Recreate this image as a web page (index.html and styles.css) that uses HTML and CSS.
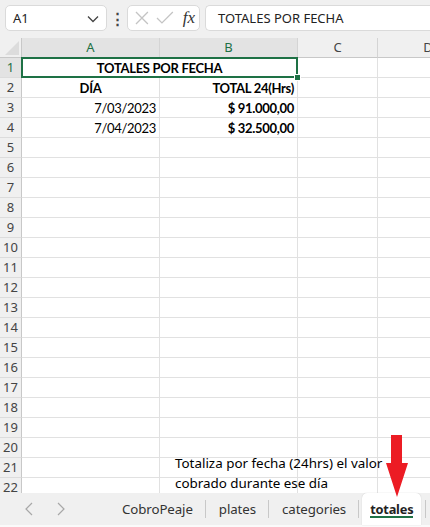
FILE: index.html
```html
<!DOCTYPE html>
<html lang="es">
<head>
<meta charset="utf-8">
<link rel="stylesheet" href="styles.css">
</head>
<body>
<div class="app">
  <div class="topbar">
    <div class="namebox"><span>A1</span>
      <svg class="chev" width="12" height="8" viewBox="0 0 12 8"><path d="M1 1.5 L6 6.5 L11 1.5" fill="none" stroke="#444" stroke-width="1.3"/></svg>
    </div>
    <div class="dots">⋮</div>
    <div class="fxbox">
      <svg width="16" height="16" viewBox="0 0 16 16"><path d="M2 2 L14 14 M14 2 L2 14" stroke="#c4c4c4" stroke-width="1.3" fill="none"/></svg>
      <svg width="18" height="16" viewBox="0 0 18 16"><path d="M1 8 L6 13 L17 2" stroke="#c4c4c4" stroke-width="1.3" fill="none"/></svg>
      <span class="fx">fx</span>
    </div>
    <div class="formula">TOTALES POR FECHA</div>
  </div>

  <div class="sheet">
    <div class="corner"><span class="tri"></span></div>
    <div class="ch sel">A</div>
    <div class="ch sel">B</div>
    <div class="ch">C</div>
    <div class="ch last">D</div>

    <div class="rh sel">1</div>
    <div class="c merged b center">TOTALES POR FECHA<span class="selbox"><span class="handle"></span></span></div>
    <div class="c"></div>
    <div class="c"></div>

    <div class="rh">2</div>
    <div class="c b center">DÍA</div>
    <div class="c b right">TOTAL 24(Hrs)</div>
    <div class="c"></div>
    <div class="c"></div>

    <div class="rh">3</div>
    <div class="c right">7/03/2023</div>
    <div class="c b right">$ 91.000,00</div>
    <div class="c"></div>
    <div class="c"></div>

    <div class="rh">4</div>
    <div class="c right">7/04/2023</div>
    <div class="c b right">$ 32.500,00</div>
    <div class="c"></div>
    <div class="c"></div>

    <div class="rh">5</div><div class="c"></div><div class="c"></div><div class="c"></div><div class="c"></div>
    <div class="rh">6</div><div class="c"></div><div class="c"></div><div class="c"></div><div class="c"></div>
    <div class="rh">7</div><div class="c"></div><div class="c"></div><div class="c"></div><div class="c"></div>
    <div class="rh">8</div><div class="c"></div><div class="c"></div><div class="c"></div><div class="c"></div>
    <div class="rh">9</div><div class="c"></div><div class="c"></div><div class="c"></div><div class="c"></div>
    <div class="rh">10</div><div class="c"></div><div class="c"></div><div class="c"></div><div class="c"></div>
    <div class="rh">11</div><div class="c"></div><div class="c"></div><div class="c"></div><div class="c"></div>
    <div class="rh">12</div><div class="c"></div><div class="c"></div><div class="c"></div><div class="c"></div>
    <div class="rh">13</div><div class="c"></div><div class="c"></div><div class="c"></div><div class="c"></div>
    <div class="rh">14</div><div class="c"></div><div class="c"></div><div class="c"></div><div class="c"></div>
    <div class="rh">15</div><div class="c"></div><div class="c"></div><div class="c"></div><div class="c"></div>
    <div class="rh">16</div><div class="c"></div><div class="c"></div><div class="c"></div><div class="c"></div>
    <div class="rh">17</div><div class="c"></div><div class="c"></div><div class="c"></div><div class="c"></div>
    <div class="rh">18</div><div class="c"></div><div class="c"></div><div class="c"></div><div class="c"></div>
    <div class="rh">19</div><div class="c"></div><div class="c"></div><div class="c"></div><div class="c"></div>
    <div class="rh">20</div><div class="c"></div><div class="c"></div><div class="c"></div><div class="c"></div>
    <div class="rh">21</div><div class="c"></div><div class="c"></div><div class="c"></div><div class="c"></div>
    <div class="rh">22</div><div class="c"></div><div class="c"></div><div class="c"></div><div class="c"></div>

    <div class="note">Totaliza por fecha (24hrs) el valor<br>cobrado durante ese día</div>
  </div>

  <div class="tabbar">
    <div class="navs">
      <svg width="10" height="14" viewBox="0 0 10 14"><path d="M8 1 L2 7 L8 13" fill="none" stroke="#a8a8a8" stroke-width="1.2"/></svg>
      <svg width="10" height="14" viewBox="0 0 10 14"><path d="M2 1 L8 7 L2 13" fill="none" stroke="#a8a8a8" stroke-width="1.2"/></svg>
    </div>
    <div class="tab">CobroPeaje</div>
    <div class="sep"></div>
    <div class="tab">plates</div>
    <div class="sep"></div>
    <div class="tab">categories</div>
    <div class="sep"></div>
    <div class="tab active">totales</div>
    <div class="sep"></div>
  </div>

  <svg class="arrow" width="26" height="64" viewBox="0 0 26 64"><path d="M7 0 H18 V28 H24 L13 62 L2 28 H7 Z" fill="#ec1c24"/></svg>
</div>
</body>
</html>
```

FILE: styles.css
```css
* { box-sizing: border-box; }
html, body { margin: 0; padding: 0; }
body {
  width: 430px;
  height: 527px;
  overflow: hidden;
  background: #f0f0f0;
  font-family: "Noto Sans", "Open Sans", sans-serif;
  color: #222;
}
.app { position: relative; width: 430px; height: 527px; display: flex; flex-direction: column; overflow: hidden; }

.topbar {
  height: 38px;
  display: flex;
  align-items: flex-start;
  padding: 5px 0 0 5px;
  background: #f0f0f0;
  flex: none;
}
.namebox {
  width: 102px;
  height: 26px;
  background: #fff;
  border: 1px solid #dadada;
  border-radius: 5px;
  display: flex;
  align-items: center;
  justify-content: space-between;
  padding: 0 7px 0 7px;
  font-size: 13px;
  color: #222;
}
.chev { margin-top: 1px; }
.dots {
  width: 20px;
  text-align: center;
  font-size: 15px;
  line-height: 26px;
  font-weight: bold;
  color: #444;
}
.fxbox {
  width: 73px;
  height: 26px;
  background: #fff;
  border: 1px solid #dadada;
  border-radius: 5px;
  display: flex;
  align-items: center;
  gap: 6px;
  padding: 0 4px 0 6px;
}
.fx {
  font-family: "Liberation Serif", "DejaVu Serif", serif;
  font-style: italic;
  font-size: 17px;
  color: #333;
  margin-left: 3px;
}
.formula {
  flex: 1;
  margin-left: 5px;
  height: 26px;
  background: #fff;
  border: 1px solid #dadada;
  border-right: none;
  border-radius: 5px 0 0 5px;
  font-size: 13px;
  line-height: 24px;
  padding-left: 12px;
  color: #222;
}

.sheet {
  position: relative;
  flex: none;
  width: 430px;
  height: 455px;
  overflow: hidden;
  background: #fff;
  display: grid;
  grid-template-columns: 22px 138px 138px 80px 100px;
  grid-template-rows: 20px;
  grid-auto-rows: 20px;
  font-family: Lato, "Liberation Sans", sans-serif;
  font-size: 13px;
  letter-spacing: -0.3px;
}
.corner {
  position: relative;
  background: #f0f0f0;
  border-right: 1px solid #c8c8c8;
  border-bottom: 1px solid #c8c8c8;
}
.tri {
  position: absolute;
  right: 2px;
  bottom: 2px;
  width: 0; height: 0;
  border-left: 14px solid transparent;
  border-bottom: 14px solid #dcdcdc;
}
.ch {
  background: #f0f0f0;
  border-right: 1px solid #d4d4d4;
  border-bottom: 1px solid #c8c8c8;
  text-align: center;
  font-family: "Noto Sans", sans-serif;
  font-size: 13px;
  letter-spacing: 0;
  line-height: 19px;
  color: #444;
}
.ch.sel { background: #e3e3e3; color: #1e7145; }
.ch.last { border-right: none; }
.rh {
  background: #f0f0f0;
  border-right: 1px solid #c8c8c8;
  border-bottom: 1px solid #dcdcdc;
  text-align: center;
  font-family: "Noto Sans", sans-serif;
  font-size: 13px;
  letter-spacing: 0;
  line-height: 19px;
  color: #444;
}
.rh.sel { color: #1e7145; background: #e3e3e3; }
.c {
  border-right: 1px solid #e1e1e1;
  border-bottom: 1px solid #e1e1e1;
  line-height: 20px;
  padding: 0 3px;
  white-space: nowrap;
  color: #000;
}
.c.b { font-weight: bold; }
.center { text-align: center; }
.right { text-align: right; }
.merged { grid-column: span 2; position: relative; }
.selbox {
  position: absolute;
  left: -1px; top: -1px; right: -1px; bottom: -1px;
  border: 2px solid #1e7145;
}
.handle {
  position: absolute;
  right: -5px; bottom: -5px;
  width: 7px; height: 7px;
  background: #1e7145;
  border: 1px solid #fff;
}
.note {
  position: absolute;
  left: 175px;
  top: 415px;
  font-family: "Noto Sans", sans-serif;
  font-size: 13.4px;
  letter-spacing: 0;
  line-height: 20px;
  color: #000;
  white-space: nowrap;
}

.tabbar {
  flex: none;
  height: 34px;
  background: #f0f0f0;
  display: flex;
  align-items: stretch;
  border-bottom: 2px solid #fafafa;
  font-family: "Noto Sans", sans-serif;
  font-size: 13.3px;
  letter-spacing: -0.1px;
  color: #333;
}
.tabbar > * { flex: none; }
.navs {
  width: 109px;
  display: flex;
  align-items: center;
  gap: 22px;
  padding-left: 24px;
}
.tab {
  display: flex;
  align-items: center;
  padding: 0 12px 0 13px;
  white-space: nowrap;
}
.sep { width: 1px; background: #c8c8c8; margin: 7px 0; }
.tab.active {
  position: relative;
  background: #fff;
  border-radius: 5px 5px 0 0;
  font-weight: bold;
  font-size: 12.8px;
  letter-spacing: -0.2px;
  color: #222;
  margin: 0 4px 0 3px;
  padding: 0 8px;
  box-shadow: 0 0 1px #bbb;
}
.tab.active::after {
  content: "";
  position: absolute;
  left: 8px; right: 8px;
  bottom: 7px;
  height: 2px;
  background: #1e7145;
}
.arrow { position: absolute; left: 384px; top: 435px; }
```
